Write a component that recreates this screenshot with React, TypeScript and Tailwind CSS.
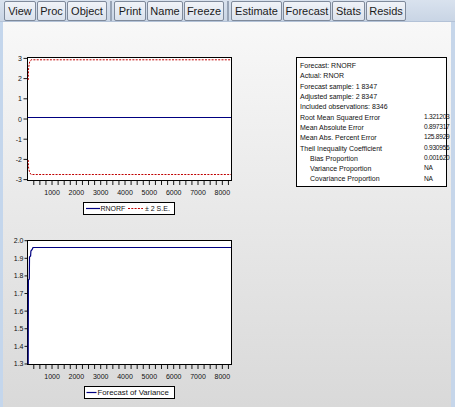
import React from 'react';

const groups = [
  [
    { label: 'View', w: 'w-[32px]' },
    { label: 'Proc', w: 'w-[29px]' },
    { label: 'Object', w: 'w-[40px]' },
  ],
  [
    { label: 'Print', w: 'w-[32px]' },
    { label: 'Name', w: 'w-[36px]' },
    { label: 'Freeze', w: 'w-[40px]' },
  ],
  [
    { label: 'Estimate', w: 'w-[51px]' },
    { label: 'Forecast', w: 'w-[48px]' },
    { label: 'Stats', w: 'w-[33px]' },
    { label: 'Resids', w: 'w-[40px]' },
  ],
];

const stats: { label: string; value?: string; indent?: boolean }[] = [
  { label: 'Forecast: RNORF' },
  { label: 'Actual: RNOR' },
  { label: 'Forecast sample: 1 8347' },
  { label: 'Adjusted sample: 2 8347' },
  { label: 'Included observations: 8346' },
  { label: 'Root Mean Squared Error', value: '1.321203' },
  { label: 'Mean Absolute Error', value: '0.897317' },
  { label: 'Mean Abs. Percent Error', value: '125.8929' },
  { label: 'Theil Inequality Coefficient', value: '0.930956' },
  { label: 'Bias Proportion', value: '0.001620', indent: true },
  { label: 'Variance Proportion', value: 'NA', indent: true },
  { label: 'Covariance Proportion', value: 'NA', indent: true },
];

const NAVY = '#000080';
const RED = '#c00000';

// x position (page px) for an observation number
const xOf = (obs: number) => 27.7 + obs * 0.02433;

const XAxis = ({ y }: { y: number }) => (
  <g>
    {Array.from({ length: 33 }, (_, i) => (i + 1) * 250).map((obs) => (
      <line key={obs} x1={xOf(obs)} x2={xOf(obs)} y1={y} y2={y + 4.5} stroke="#000" strokeWidth={0.9} />
    ))}
    {[1000, 2000, 3000, 4000, 5000, 6000, 7000, 8000].map((obs) => (
      <text key={obs} x={xOf(obs)} y={y + 14.5} fontSize={7} textAnchor="middle" fill="#111">
        {obs}
      </text>
    ))}
  </g>
);

const ForecastChart = () => {
  const yOf = (v: number) => 119 - v * 20.2;
  return (
    <svg width={237} height={170} viewBox="3 50 237 170" className="block font-['Liberation_Sans',Arial,sans-serif]">
      <rect x={27.5} y={57.5} width={204} height={123} fill="#fff" stroke="#000" strokeWidth={1} />
      {[3, 2, 1, 0, -1, -2, -3].map((v) => (
        <g key={v}>
          <line x1={23.5} x2={27.5} y1={yOf(v)} y2={yOf(v)} stroke="#000" strokeWidth={0.9} />
          <text x={22} y={yOf(v) + 2.5} fontSize={7} textAnchor="end" fill="#111">
            {v}
          </text>
        </g>
      ))}
      <line x1={28} x2={231} y1={117.5} y2={117.5} stroke={NAVY} strokeWidth={1.2} />
      <path d="M28.2,80 L28.6,68 L29.6,62 L31,59.8 L231,59.8" fill="none" stroke={RED} strokeWidth={1} strokeDasharray="2 1.3" />
      <path d="M28.2,160 L28.6,168 L29.7,172.5 L31,174.5 L231,174.5" fill="none" stroke={RED} strokeWidth={1} strokeDasharray="2 1.3" />
      <XAxis y={180.5} />
      <rect x={83.5} y={202.5} width={91} height={12} fill="#fff" stroke="#000" strokeWidth={1} />
      <line x1={86} x2={100} y1={208.5} y2={208.5} stroke={NAVY} strokeWidth={1.2} />
      <text x={100.5} y={211} fontSize={7} fill="#111">RNORF</text>
      <line x1={128} x2={143} y1={208.5} y2={208.5} stroke={RED} strokeWidth={1} strokeDasharray="2 1.3" />
      <text x={145} y={211} fontSize={7} fill="#111">± 2 S.E.</text>
    </svg>
  );
};

const VarianceChart = () => {
  const yOf = (v: number) => 240.7 + (2.0 - v) * 176.1;
  return (
    <svg width={237} height={187} viewBox="3 220 237 187" className="block font-['Liberation_Sans',Arial,sans-serif]">
      <rect x={27.5} y={240.5} width={204} height={124} fill="#fff" stroke="#000" strokeWidth={1} />
      {[2.0, 1.9, 1.8, 1.7, 1.6, 1.5, 1.4, 1.3].map((v) => (
        <g key={v}>
          <line x1={24.5} x2={27.5} y1={yOf(v)} y2={yOf(v)} stroke="#000" strokeWidth={0.9} />
          <text x={23.5} y={yOf(v) + 2.5} fontSize={7} textAnchor="end" fill="#111">
            {v.toFixed(1)}
          </text>
        </g>
      ))}
      <path
        d="M28.2,364 L28.4,280 L29.3,279 L29.5,257 L30.6,256 L30.9,251 L32.2,249.5 L33,247.5 L231,247.5"
        fill="none"
        stroke={NAVY}
        strokeWidth={1.2}
      />
      <XAxis y={364.5} />
      <rect x={84.5} y={386.5} width={90} height={12} fill="#fff" stroke="#000" strokeWidth={1} />
      <line x1={86.5} x2={96.5} y1={392.5} y2={392.5} stroke={NAVY} strokeWidth={1.2} />
      <text x={97.5} y={395.2} fontSize={7.8} fill="#111">Forecast of Variance</text>
    </svg>
  );
};

export default function App() {
  return (
    <div className="w-[455px] h-[407px] flex flex-col overflow-hidden font-['Liberation_Sans',Arial,sans-serif]">
      {/* toolbar */}
      <div className="h-[22px] shrink-0 flex items-start pl-[4px] pt-[1px] bg-gradient-to-b from-[#d9e2ee] to-[#c9d5e5] border-b border-[#b3c2d7]">
        {groups.map((group, gi) => (
          <React.Fragment key={gi}>
            {gi > 0 && (
              <div className="w-[7px] h-[20px] flex justify-center">
                <div className="w-[2px] h-full bg-[#aab6c7] border-x border-[#98a4b6]" />
              </div>
            )}
            <div className="flex gap-px">
              {group.map((b) => (
                <div
                  key={b.label}
                  className={`${b.w} h-[20px] flex items-center justify-center rounded-[2px] border border-[#7f8a9b] bg-gradient-to-b from-[#f0f3f8] to-[#dbe2ec] text-[11px] text-[#1b1b1b] leading-none`}
                >
                  {b.label}
                </div>
              ))}
            </div>
          </React.Fragment>
        ))}
      </div>

      {/* main view */}
      <div className="flex-1 flex border-l-[3px] border-l-[#c4d6ec] border-r-[4px] border-r-[#c6d6ea] bg-gradient-to-b from-[#f8f8f8] to-[#d9d9d9]">
        <div className="w-[237px] shrink-0 flex flex-col pt-[28px]">
          <ForecastChart />
          <VarianceChart />
        </div>

        <div className="ml-[56px] mt-[34.5px] w-[151px] h-[130px] border border-black bg-white pl-[3px] pt-[3px] text-[7px] text-[#111] self-start">
          {stats.map((s) => (
            <div key={s.label} className="flex h-[10.3px] items-center leading-none whitespace-nowrap">
              <span className={`${s.indent ? 'pl-[10px]' : ''} w-[124px] shrink-0`}>{s.label}</span>
              {s.value && <span className="text-[6.6px] tracking-[-0.25px]">{s.value}</span>}
            </div>
          ))}
        </div>
      </div>
    </div>
  );
}
